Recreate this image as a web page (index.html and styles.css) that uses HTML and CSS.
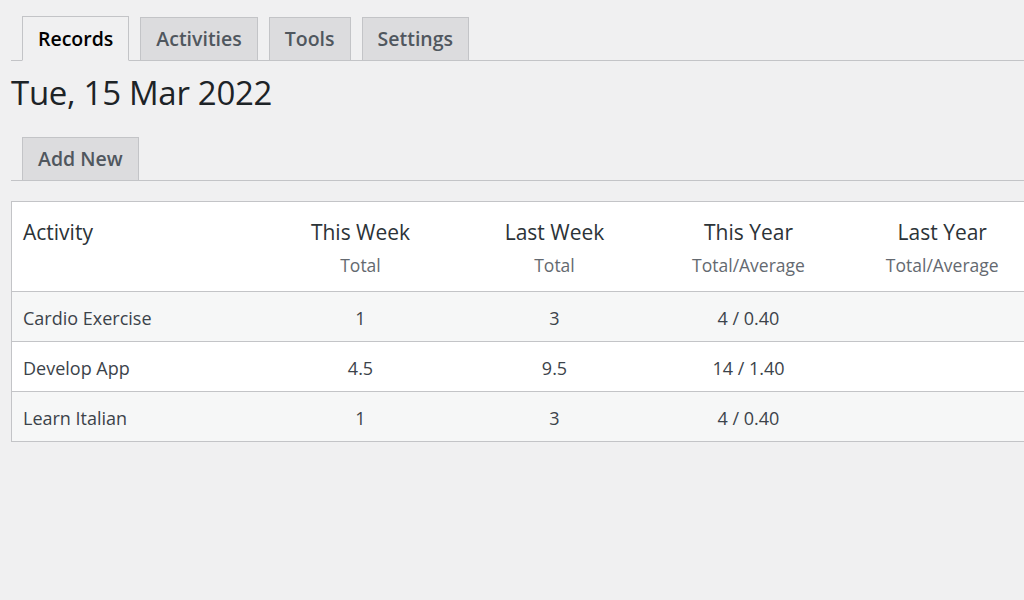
FILE: index.html
```html
<!DOCTYPE html>
<html lang="en">
<head>
    <meta charset="UTF-8">
    <meta name="viewport" content="width=device-width, initial-scale=1.0">
    <title>Records</title>
    <link rel="stylesheet" href="styles.css">
</head>
<body>

    <div class="wrap">
        <!-- Abas principais -->
        <nav class="nav-tabs main-tabs">
            <a class="nav-tab active" href="#">Records</a>
            <a class="nav-tab" href="#">Activities</a>
            <a class="nav-tab" href="#">Tools</a>
            <a class="nav-tab" href="#">Settings</a>
        </nav>

        <h1 class="date">Tue, 15 Mar 2022</h1>

        <nav class="nav-tabs sub-tabs">
            <a class="nav-tab" href="#">Add New</a>
        </nav>

        <!-- Tabela de registros -->
        <table class="records">
            <colgroup>
                <col class="col-name">
                <col class="col-num">
                <col class="col-num">
                <col class="col-num">
                <col class="col-num">
            </colgroup>
            <thead>
                <tr>
                    <th class="name">Activity</th>
                    <th>This Week<span class="sub">Total</span></th>
                    <th>Last Week<span class="sub">Total</span></th>
                    <th>This Year<span class="sub">Total/Average</span></th>
                    <th>Last Year<span class="sub">Total/Average</span></th>
                </tr>
            </thead>
            <tbody>
                <tr>
                    <td class="name">Cardio Exercise</td>
                    <td>1</td>
                    <td>3</td>
                    <td>4 / 0.40</td>
                    <td></td>
                </tr>
                <tr>
                    <td class="name">Develop App</td>
                    <td>4.5</td>
                    <td>9.5</td>
                    <td>14 / 1.40</td>
                    <td></td>
                </tr>
                <tr>
                    <td class="name">Learn Italian</td>
                    <td>1</td>
                    <td>3</td>
                    <td>4 / 0.40</td>
                    <td></td>
                </tr>
            </tbody>
        </table>
    </div>

</body>
</html>
```

FILE: styles.css
```css
/* Página geral */
html, body {
    overflow: hidden;
}

body {
    margin: 0;
    background: #f0f0f1;
    font-family: "Open Sans", "Noto Sans", Arial, sans-serif;
    color: #3c434a;
}

.wrap {
    padding-left: 11px;
}

/* Abas */
.nav-tabs {
    display: flex;
    align-items: flex-end;
    gap: 11px;
    padding-left: 11px;
    border-bottom: 1px solid #c3c4c7;
}

.main-tabs {
    margin-top: 16px;
}

.sub-tabs {
    margin-top: 20px;
}

.nav-tab {
    display: flex;
    align-items: center;
    box-sizing: border-box;
    height: 44px;
    padding: 0 15px 1px;
    margin-bottom: -1px;
    background: #dcdcde;
    border: 1px solid #c3c4c7;
    color: #50575e;
    font-size: 19.5px;
    font-weight: 600;
    text-decoration: none;
}

.nav-tab.active {
    background: #f0f0f1;
    border-bottom-color: #f0f0f1;
    color: #000;
    height: 45px;
}

/* Data */
.date {
    margin: 8px 0 0;
    font-size: 33px;
    line-height: 48px;
    font-weight: 400;
    color: #1d2327;
    letter-spacing: -0.3px;
}

/* Tabela */
.records {
    margin-top: 20px;
    border-collapse: collapse;
    table-layout: fixed;
    width: 1028px;
    background: #fff;
    border: 1px solid #c3c4c7;
    font-size: 18px;
}

.col-name {
    width: 252px;
}

.col-num {
    width: 194px;
}

.records th {
    height: 90px;
    padding: 0;
    font-weight: 400;
    font-size: 21px;
    color: #2c3338;
    text-align: center;
    vertical-align: top;
    line-height: 30px;
    padding-top: 15px;
    box-sizing: border-box;
}

.records th .sub {
    display: block;
    margin-top: 7px;
    font-size: 17.5px;
    line-height: 22px;
    color: #646970;
}

.records td {
    height: 47px;
    padding: 2px 0 0;
    text-align: center;
    border-top: 1px solid #c3c4c7;
}

.records .name {
    text-align: left;
    padding-left: 11px;
}

.records tbody tr:nth-child(odd) {
    background: #f6f7f7;
}
```
